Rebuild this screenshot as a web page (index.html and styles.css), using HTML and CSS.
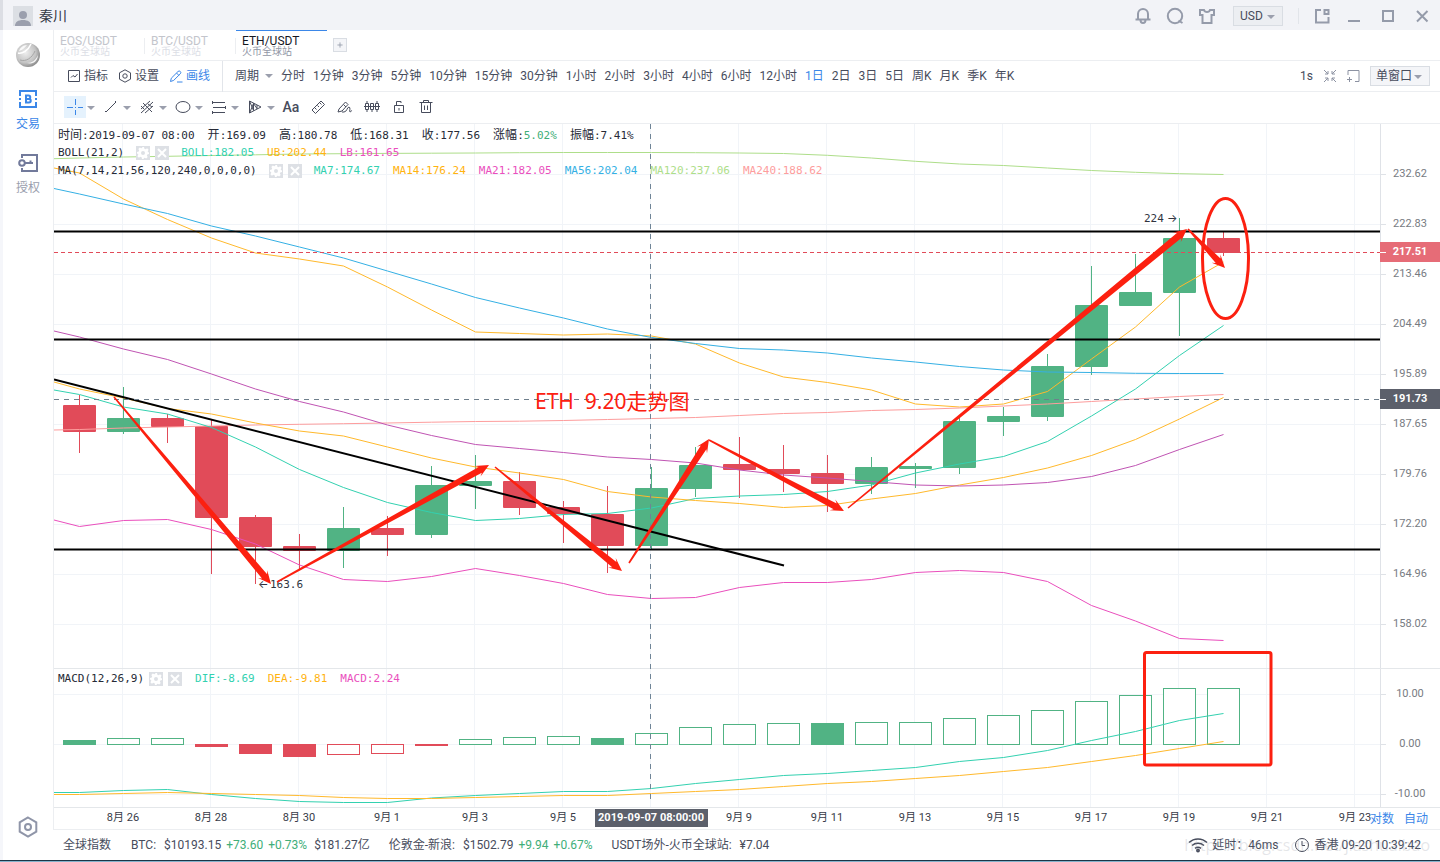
FILE: index.html
```html
<!DOCTYPE html>
<html lang="zh-CN">
<head>
<meta charset="utf-8">
<title>ETH/USDT</title>
<link rel="stylesheet" href="styles.css">
</head>
<body>
<svg class="symbols" aria-hidden="true">
  <symbol id="gear" viewBox="0 0 14 14"><path fill="#fff" fill-rule="evenodd" stroke="none" d="M6 1h2l.4 1.700 1.200.5 1.500-.9 1.500 1.500-.9 1.500.5 1.200L13 6v2l-1.700.4-.5 1.200.9 1.500-1.500 1.500-1.500-.9-1.200.5L8 13H6l-.4-1.700-1.200-.5-1.500.9-1.500-1.500.9-1.500-.5-1.200L1 8V6l1.700-.4.500-1.200-.9-1.500 1.500-1.500 1.500.9 1.200-.5zM7 5a2 2 0 1 0 0 4 2 2 0 0 0 0-4z"/></symbol>
  <symbol id="cross" viewBox="0 0 14 14"><path d="M3 3l8 8M11 3l-8 8" stroke="#fff" stroke-width="2"/></symbol>
</svg>
<div class="app">
  <header class="titlebar">
    <svg class="avatar" viewBox="0 0 20 20"><rect width="20" height="20" fill="#dcdfe4"/><circle cx="10" cy="9" r="4" fill="#9b9fad"/><path d="M2 20c0-4 3-6 8-6s8 2 8 6z" fill="#9b9fad"/></svg>
    <span class="user">秦川</span>
    <div class="window-tools">
      <button aria-label="通知"><svg viewBox="0 0 18 18"><path d="M4 12.500V7a5 5 0 0 1 10 0v5.500M1.500 12.500h15M6.500 13a2.500 3 0 0 0 5 0"/></svg></button>
      <button aria-label="搜索"><svg viewBox="0 0 18 18"><circle cx="9" cy="9" r="7.200"/><path d="M12.500 13.500l4 2.500"/></svg></button>
      <button aria-label="皮肤"><svg viewBox="0 0 18 18"><path d="M2 3h4c.8 2.600 5.200 2.600 6 0h4v5h-2.500v8h-9V8H2z"/></svg></button>
      <label class="picker picker-usd"><select aria-label="货币"><option>USD</option></select></label>
      <span class="rule"></span>
      <button aria-label="弹出"><svg viewBox="0 0 18 18"><path d="M8 3H3v12.500h12.500V10M11.500 3h4v4h-4z"/></svg></button>
      <button aria-label="最小化"><svg viewBox="0 0 18 18"><path d="M3 14h12"/></svg></button>
      <button aria-label="最大化"><svg viewBox="0 0 18 18"><path d="M4 4h10v10H4z"/></svg></button>
      <button aria-label="关闭"><svg viewBox="0 0 18 18"><path d="M4 4l10.500 10.500M14.500 4L4 14.500"/></svg></button>
    </div>
  </header>

  <div class="body">
    <nav class="sidebar">
      <svg class="logo" viewBox="0 0 24 24"><defs><radialGradient id="ball" cx=".4" cy=".4" r=".65"><stop offset="0" stop-color="#eee"/><stop offset=".65" stop-color="#c4c4c4"/><stop offset="1" stop-color="#868686"/></radialGradient></defs><circle cx="12" cy="12" r="12" fill="url(#ball)"/><path d="M2 10C6 11 12 8 15 1" stroke="#fff" stroke-width="1.500" fill="none"/><path d="M3 8c1-3 4-6 8-6-2 2-4 5-8 6zM11 20c5 0 9-3 11-8 0 5-4 10-11 8z" fill="#fff" opacity=".85"/><path d="M4 17c6 2 12-2 15-9" stroke="#a5a5a5" fill="none"/></svg>
      <a class="side-link active" href="#trade"><svg viewBox="0 0 20 20"><path d="M2 7V2h16v5M2 13v5h16v-5"/><path d="M1 9h2v2H1zM17 9h2v2h-2z" stroke="none" fill="currentColor"/><path d="M8 6.500h2.500a1.600 1.600 0 0 1 0 3.500H8zM8 10h3a1.700 1.700 0 0 1 0 3.500H8z"/></svg>交易</a>
      <a class="side-link" href="#auth"><svg viewBox="0 0 20 20"><path d="M4 5V2h15v16H4v-3"/><circle cx="4" cy="10" r="2.800"/><path d="M7 10h8M12.500 7.500V10"/></svg>授权</a>
      <button class="side-settings" aria-label="设置"><svg viewBox="0 0 22 22"><path d="M11 1.500l8.300 4.800v9.400L11 20.500l-8.300-4.800V6.300z"/><circle cx="11" cy="11" r="3"/></svg></button>
    </nav>

    <div class="content">
      <main class="workspace">
        <div class="tabs">
          <button class="tab"><b>EOS/USDT</b><small>火币全球站</small></button>
          <button class="tab"><b>BTC/USDT</b><small>火币全球站</small></button>
          <button class="tab current"><b>ETH/USDT</b><small>火币全球站</small></button>
          <button class="add" aria-label="添加"><svg viewBox="0 0 14 14"><path d="M4 7h6M7 4v6"/></svg></button>
        </div>

        <div class="toolbar">
          <button class="tool"><svg viewBox="0 0 14 14"><path d="M1.500 1.500h11v11h-11zM4 8.500l2-2 2 1.500 2.500-3"/></svg>指标</button>
          <button class="tool"><svg viewBox="0 0 14 14"><path d="M7 .8l5.500 3v6.400L7 13.200l-5.500-3V3.800z"/><circle cx="7" cy="7" r="2.200"/></svg>设置</button>
          <button class="tool on"><svg viewBox="0 0 14 14"><path d="M1.500 12.500l.8-3.300L9 2.500a1.600 1.600 0 0 1 2.300 2.300l-6.600 6.600zM7.500 4l2.300 2.300M8 13h5.500"/></svg>画线</button>
          <span class="rule"></span>
          <div class="periods">
            <button class="drop">周期</button><button>分时</button><button>1分钟</button><button>3分钟</button><button>5分钟</button><button>10分钟</button><button>15分钟</button><button>30分钟</button><button>1小时</button><button>2小时</button><button>3小时</button><button>4小时</button><button>6小时</button><button>12小时</button><button class="on">1日</button><button>2日</button><button>3日</button><button>5日</button><button>周K</button><button>月K</button><button>季K</button><button>年K</button>
          </div>
          <div class="view-tools">
            <span>1s</span>
            <button aria-label="收缩"><svg viewBox="0 0 14 14"><path d="M1 1l4 4M5 2v3H2M13 1L9 5M9 2v3h3M1 13l4-4M2 9h3v3M13 13L9 9M12 9H9v3"/></svg></button>
            <button aria-label="添加窗口"><svg viewBox="0 0 14 14"><path d="M2 6V1.500h11v11H9M1 10.500h5M3.500 8v5"/></svg></button>
            <label class="picker picker-window"><select aria-label="窗口"><option>单窗口</option></select></label>
          </div>
        </div>

        <div class="drawbar">
          <button class="pen has-menu on" aria-label="十字光标"><svg viewBox="0 0 16 16"><path d="M8.500 0v6M8.500 11v5M0 8.500h6M11 8.500h5M8 8.500h1"/></svg></button>
          <button class="pen has-menu" aria-label="线段"><svg viewBox="0 0 16 16"><path d="M3.500 12.500l9-9"/><path d="M2 12.500h2M12.500 2v2"/></svg></button>
          <button class="pen has-menu" aria-label="通道"><svg viewBox="0 0 16 16"><path d="M2 10l9-8M2 14L14 3M6 14l8-7M4 4l9 9M2 7l3 3M9 5l4 3"/></svg></button>
          <button class="pen has-menu" aria-label="椭圆"><svg viewBox="0 0 16 16"><ellipse cx="8" cy="8" rx="7" ry="5.500"/></svg></button>
          <button class="pen has-menu" aria-label="水平线"><svg viewBox="0 0 16 16"><path d="M1 3.500h13M2 8.500h13M1 13.500h13M1.500 2v3M14.500 7v3M1.500 12v3"/></svg></button>
          <button class="pen has-menu" aria-label="扇形"><svg viewBox="0 0 16 16"><path d="M2.500 2v12L14 8zM2.500 2l4 9.500M6.500 4.500v7M10 6v4M3 13l3.500-8.500L10 9.500"/></svg></button>
          <button class="pen letters">Aa</button>
          <button class="pen" aria-label="尺子"><svg viewBox="0 0 16 16"><path d="M2 11l9-9 3.500 3.500-9 9zM5 9l1.500 1.500M7.500 6.500L9 8M10 4l1.500 1.500"/></svg></button>
          <button class="pen" aria-label="画笔"><svg viewBox="0 0 16 16"><path d="M1 13l1-3 6.500-7 2.500 2.500L5 12zM6.500 5.500L9 8M5 13h2c3 0 3-5 5-5s0 5 1 5 1-1.500 2-1.500"/></svg></button>
          <button class="pen" aria-label="K线"><svg viewBox="0 0 16 16"><path d="M0 7.500h16M1.500 4.500h3v6h-3zM6.500 4.500h3v6h-3zM11.500 4.500h3v6h-3zM3 2v2M8 11v2M13 2v2M3 11v2M13 11v2"/></svg></button>
          <button class="pen" aria-label="锁定"><svg viewBox="0 0 16 16"><path d="M3.500 6.500h9v7h-9zM5.500 6.500v-4h4.500V4M8 9v2.500"/></svg></button>
          <button class="pen" aria-label="删除"><svg viewBox="0 0 16 16"><path d="M1.500 3.500h13M5.500 3.500v-2h5v2M3.500 3.500v10h9v-10M6.500 6.500v4.500M9.500 6.500v4.500"/></svg></button>
        </div>

        <section class="chart">
          <svg id="plot" class="plot" viewBox="54 124 1386 705" role="img" aria-label="ETH/USDT"></svg>
          <div class="legend legend-price">
            <p class="row"><span><i>时间</i>:2019-09-07 08:00</span><span><i>开</i>:169.09</span><span><i>高</i>:180.78</span><span><i>低</i>:168.31</span><span><i>收</i>:177.56</span><span><i>涨幅</i>:<em>5.02%</em></span><span><i>振幅</i>:7.41%</span></p>
            <p class="row"><span>BOLL(21,2)</span><span class="keys"><button class="key" aria-label="设置"><svg><use href="#gear"/></svg></button><button class="key" aria-label="关闭"><svg><use href="#cross"/></svg></button></span><span class="teal">BOLL:182.05</span><span class="amber">UB:202.44</span><span class="pink">LB:161.65</span></p>
            <p class="row"><span>MA(7,14,21,56,120,240,0,0,0,0)</span><span class="keys"><button class="key" aria-label="设置"><svg><use href="#gear"/></svg></button><button class="key" aria-label="关闭"><svg><use href="#cross"/></svg></button></span><span class="teal">MA7:174.67</span><span class="amber">MA14:176.24</span><span class="pink">MA21:182.05</span><span class="blue">MA56:202.04</span><span class="lime">MA120:237.06</span><span class="salmon">MA240:188.62</span></p>
          </div>
          <div class="legend legend-macd">
            <p class="row"><span class="name-keys">MACD(12,26,9)<span class="keys"><button class="key" aria-label="设置"><svg><use href="#gear"/></svg></button><button class="key" aria-label="关闭"><svg><use href="#cross"/></svg></button></span></span><span class="teal">DIF:-8.69</span><span class="amber">DEA:-9.81</span><span class="pink">MACD:2.24</span></p>
          </div>
          <div class="scale"><button>对数</button><button>自动</button></div>
        </section>
      </main>

      <footer class="status">
        <span>全球指数</span>
        <div class="quote"><span class="sym">BTC:</span><span>$10193.15</span><span class="up">+73.60</span><span class="up">+0.73%</span><span class="cap">$181.27亿</span></div>
        <div class="quote"><span class="sym">伦敦金-新浪:</span><span>$1502.79</span><span class="up">+9.94</span><span class="up">+0.67%</span></div>
        <div class="quote"><span class="sym">USDT场外-火币全球站:</span><span>¥7.04</span></div>
        <div class="net">
          <svg class="wifi" viewBox="0 0 20 16"><path d="M1 5.500a13 13 0 0 1 18 0M4 8.500a9 9 0 0 1 12 0M7 11.300a5 5 0 0 1 6 0"/><circle cx="10" cy="13.500" r="1.200" fill="currentColor"/></svg>
          <span>延时：46ms</span>
          <svg class="clock" viewBox="0 0 16 16"><circle cx="8" cy="8" r="6.500"/><path d="M8 4v4.500h3"/></svg>
          <span>香港 09-20 10:39:42</span>
          <span class="watermark">https://blog.csdn.net/jiashuaibao</span>
        </div>
      </footer>
    </div>
  </div>
  <div class="desktop-edge"></div>
</div>
<script src="chart.js"></script>
</body>
</html>
```

FILE: styles.css
```css
* { box-sizing: border-box; }
body {
  margin: 0;
  background: #fff;
  color: #474c5c;
  font: 12px/16px Roboto, "Noto Sans CJK SC", sans-serif;
}
button, select { font: inherit; color: inherit; }
button { display: inline-flex; align-items: center; justify-content: center; padding: 0; border: 0; background: none; }
svg { display: block; fill: none; stroke: currentColor; }
.symbols { position: absolute; width: 0; height: 0; }
.app { display: flex; flex-direction: column; min-height: 100vh; border-left: 3px solid #f5f6fa; }

.titlebar { display: flex; align-items: center; height: 30px; margin-left: -3px; padding: 2px 9px 0 10px; border-left: 3px solid #dcdee4; background: #f2f3f7; }
.avatar { width: 20px; height: 20px; stroke: none; }
.user { margin-left: 6px; color: #333845; font-size: 14px; }
.window-tools { display: flex; align-items: center; margin-left: auto; color: #959baa; }
.window-tools button { width: 18px; height: 18px; margin-right: 14px; }
.window-tools button svg { width: 18px; height: 18px; stroke-width: 2; }
.window-tools .picker-usd { margin: 0 15px 0 3px; }
.window-tools .rule { margin-right: 14px; }
.window-tools .rule ~ button { margin-right: 16px; }
.window-tools .rule + button { margin-right: 14px; }
.window-tools .rule ~ button:last-child { margin-right: 0; }
.rule { width: 1px; height: 16px; background: #e2e5ea; }
.picker { position: relative; display: block; height: 20px; border: 1px solid #d9dde3; background: #eceef2; color: #474c5c; }
.picker select { width: 100%; height: 18px; padding: 0 0 0 6px; border: 0; appearance: none; background: none; }
.picker::after, .drop::after, .has-menu::after { content: ""; border: 4px solid transparent; border-top: 4px solid #9b9fad; border-bottom: 0; }
.picker::after { position: absolute; right: 7px; top: 8px; pointer-events: none; }
.picker-usd { width: 50px; }
.picker-window { width: 60px; background: #f4f5f8; }
.picker-window select { padding-left: 5px; }

.body { display: flex; flex: 1; }
.sidebar { display: flex; flex: none; flex-direction: column; align-items: center; width: 50px; padding: 13px 0 22px; }
.logo { width: 24px; height: 24px; stroke: none; }
.side-link { display: flex; flex-direction: column; align-items: center; gap: 7px; margin-top: 22px; color: #9a9ead; text-decoration: none; }
.side-link + .side-link { margin-top: 21px; }
.side-link svg { width: 20px; height: 20px; stroke: #727a9b; stroke-width: 2; }
.side-link.active, .side-link.active svg { color: #3b87e8; stroke: #3b87e8; }
.side-settings { margin-top: auto; color: #8f95a8; }
.side-settings svg { width: 22px; height: 22px; stroke-width: 2; }

.content { flex: 1; min-width: 0; }
.workspace { border-left: 1px solid #eceef1; border-bottom: 1px solid #eceef1; }
.tabs { display: flex; height: 31px; border-bottom: 1px solid #eceef1; }
.tab { position: relative; flex-direction: column; align-items: flex-start; width: 91px; padding: 1px 0 0 6px; border-top: 1px solid transparent; color: #c3c5cc; }
.tab:first-child::after, .tab:nth-child(2)::after { content: ""; position: absolute; right: 0; top: 7px; width: 1px; height: 16px; background: #eceef1; }
.tab b { font-weight: 400; line-height: 12px; }
.tab small { color: #dcdee6; font-size: 10px; line-height: 10px; }
.tab.current { border-top-color: #3b87e8; color: #14171f; }
.tab.current small { color: #9297a6; }
.add { width: 14px; height: 14px; margin: 8px 6px; border: 1px solid #d9dde3; background: #f4f5f8; color: #959baa; }
.add svg { width: 14px; height: 14px; stroke-width: 1; }

.toolbar { display: flex; align-items: center; height: 31px; padding: 0 10px 0 13px; border-bottom: 1px solid #eceef1; white-space: nowrap; }
.tool { gap: 3px; margin-right: 10px; }
.tool svg { width: 14px; height: 14px; }
.tool + .rule { height: 31px; margin: 0 12px 0 2px; }
.on { color: #3b87e8; }
.periods { display: flex; gap: 8px; }
.drop { gap: 6px; }
.view-tools { display: flex; align-items: center; gap: 11px; margin-left: auto; color: #474c5c; }
.view-tools svg { width: 14px; height: 14px; flex: none; stroke: #8c92a2; }
.view-tools button { width: 12px; }

.drawbar { display: flex; align-items: center; height: 32px; padding: 0 0 1px 10px; border-bottom: 1px solid #eceef1; }
.pen { width: 22px; height: 22px; margin-right: 5px; }
.pen svg { width: 16px; height: 16px; flex: none; }
.has-menu { position: relative; margin-right: 14px; }
.has-menu::after { position: absolute; left: 23px; top: 10px; }
.pen.on { background: #e5f2fd; }
.letters { font-size: 14px; font-weight: 500; }

.chart { position: relative; }
.plot { width: 100%; height: auto; stroke: none; font: 11px Roboto, "Noto Sans CJK SC", sans-serif; }
.mono { font-family: "DejaVu Sans Mono", monospace; fill: #30343f; }
.pointer { font-family: Inter, sans-serif; fill: #30343f; }
.note { font: 21px "Noto Sans", "Noto Sans CJK SC", sans-serif; fill: #fc2010; white-space: pre; }
.axis-text { fill: #777b82; text-anchor: middle; }
.time-text { fill: #383c48; text-anchor: middle; }
.tag-text { fill: #fff; font-weight: 700; text-anchor: middle; }
.legend { position: absolute; left: 4px; font: 11px/18px "DejaVu Sans Mono", "Noto Sans CJK SC", monospace; color: #262a36; white-space: nowrap; }
.legend-price { top: 2px; }
.legend-macd { top: 77.4%; }
.row { display: flex; align-items: center; gap: 13px; height: 18px; margin: 0; }
.row i { font-size: 12px; font-style: normal; }
.row em { font-style: normal; color: #41ae79; }
.keys { display: flex; gap: 5px; }
.row > .keys { margin: 0 -1px; }
.name-keys { display: flex; align-items: center; gap: 5px; }
.key { width: 14px; height: 14px; background: #dde0e5; }
.key svg { width: 14px; height: 14px; flex: none; }
.teal { color: #33d1b0; }
.amber { color: #ffb30f; }
.pink { color: #ea4fbd; }
.blue { color: #35b0e4; }
.lime { color: #aede8a; }
.salmon { color: #fd9d9d; }
.scale { position: absolute; right: 12px; bottom: 2px; display: flex; gap: 10px; color: #3b87e8; }

.status { position: relative; display: flex; align-items: center; height: 30px; padding: 0 19px 0 10px; white-space: nowrap; }
.quote { display: flex; gap: 5px; margin-left: 20px; }
.quote + .quote { margin-left: 19px; }
.sym { margin-right: 3px; }
.cap { margin-left: 2px; }
.up { color: #41ae79; }
.net { position: relative; display: flex; align-items: center; gap: 4px; margin-left: auto; }
.wifi { width: 20px; height: 16px; stroke-width: 1.5; }
.clock { width: 16px; height: 16px; margin-left: 12px; }
.watermark { position: absolute; left: -4px; top: -2px; font: 16px/20px "Open Sans", sans-serif; color: rgba(150, 154, 165, .25); }
.desktop-edge { height: 2px; margin-left: -3px; background: linear-gradient(#1b3547 50%, #86b2cb 50%); }
```

FILE: chart.js
```js
const FIRST_X = 79.5;
const STEP = 44;
const UP = "#51b384";
const DOWN = "#e14b59";
const parts = [];
const add = (s) => parts.push(s);
const line = (x1, y1, x2, y2, color, extra = "") =>
  add(`<line x1="${x1}" y1="${y1}" x2="${x2}" y2="${y2}" stroke="${color}" ${extra}/>`);
const text = (x, y, cls, s) => add(`<text x="${x}" y="${y}" class="${cls}">${s}</text>`);

// Grid and axes
const prices = ["232.62", "222.83", "213.46", "204.49", "195.89", "187.65", "179.76", "172.20", "164.96", "158.02"];
const levels = prices.map((p, i) => [174.5 + i * 50, p])
  .concat([[694.5, "10.00"], [744.5, "0.00"], [794.5, "-10.00"]]);
const days = ["8月 26", "8月 28", "8月 30", "9月 1", "9月 3", "9月 5", "", "9月 9", "9月 11", "9月 13", "9月 15", "9月 17", "9月 19", "9月 21", "9月 23"];
levels.forEach(([y, label]) => {
  line(54, y, 1380, y, "#f1f4f8");
  line(1381, y, 1386, y, "#dfe2e7");
  text(1410, y + 2.5, "axis-text", label);
});
days.forEach((label, i) => {
  const x = 122.5 + i * 88;
  line(x, 124, x, 807, "#f1f4f8");
  if (label) text(x + 0.5, 821, "time-text", label);
});
line(1380.5, 124, 1380.5, 807, "#dfe2e7");
line(54, 668.5, 1440, 668.5, "#e4e7ea");
line(54, 807.5, 1440, 807.5, "#e4e7ea");

// Candles: [rising, body top, body bottom, high, low]
const candles = [
  [0, 405, 432, 395, 453], [1, 418, 432, 387, 434], [0, 418, 427, 414, 443], [0, 426, 518, 420, 574],
  [0, 517, 547, 515, 584], [0, 546, 551, 534, 570], [1, 528, 551, 507, 568], [0, 528, 535, 516, 556],
  [1, 485, 535, 466, 538], [1, 481, 486, 455, 509], [0, 481, 508, 472, 515], [0, 507, 514, 501, 543],
  [0, 514, 546, 486, 573], [1, 488, 546, 467, 550], [1, 465, 489, 447, 497], [0, 464, 470, 437, 498],
  [0, 469, 474, 445, 492], [0, 473, 484, 455, 512], [1, 467, 484, 457, 494], [1, 466, 469, 463, 488],
  [1, 421, 468, 416, 474], [1, 416, 422, 407, 436], [1, 366, 417, 354, 421], [1, 305, 367, 266, 375],
  [1, 292, 306, 254, 306], [1, 238, 293, 218, 336], [0, 238, 253, 232, 256]
];
candles.forEach(([up, top, bottom, high, low], i) => {
  const x = FIRST_X + i * STEP;
  const c = up ? UP : DOWN;
  line(x, high, x, low, c);
  add(`<rect x="${x - 16.5}" y="${top}" width="33" height="${bottom - top}" rx="1" fill="${c}"/>`);
});

// MACD bars: [rising, filled, far edge]
const bars = [
  [1, 1, 740], [1, 0, 738], [1, 0, 738], [0, 1, 747], [0, 1, 754], [0, 1, 757], [0, 0, 755], [0, 0, 754], [0, 1, 746],
  [1, 0, 739], [1, 0, 737], [1, 0, 736], [1, 1, 738], [1, 0, 733], [1, 0, 727], [1, 0, 724], [1, 0, 723], [1, 1, 723],
  [1, 0, 722], [1, 0, 722], [1, 0, 718], [1, 0, 715], [1, 0, 710], [1, 0, 701], [1, 0, 695], [1, 0, 688], [1, 0, 688]
];
bars.forEach(([up, filled, edge], i) => {
  const x = 63 + i * STEP;
  const top = up ? edge : 744;
  const bottom = up ? 745 : edge;
  const c = up ? UP : DOWN;
  add(`<rect x="${x + 0.5}" y="${top + 0.5}" width="32" height="${bottom - top - 1}" stroke="${c}" fill="${filled ? c : "#fff"}"/>`);
});

// Indicator lines: the first value sits at the left edge, the rest on each candle
const curve = (color, values) => {
  const pts = values.map((y, i) => `${i ? FIRST_X + (i - 1) * STEP : 54},${y}`).join(" ");
  add(`<polyline points="${pts}" fill="none" stroke="${color}"/>`);
};
curve("#aede8a", [158.7, 158, 157, 156.3, 155.5, 154.8, 154, 153.7, 153.4, 153.2, 153, 152.7, 152.5, 152.5, 152.5, 152.7, 153, 153.5, 155.3, 158, 161.3, 164, 165.5, 168, 170.5, 172.3, 173.7, 174.5]);
curve("#ffb92c", [168, 173, 199, 219.5, 238, 253, 259, 266, 287, 310, 332, 333.5, 335, 334, 336, 344, 363, 377, 382.5, 390, 404, 407, 404, 391.5, 359, 327, 287, 262]);
curve("#35b0e4", [188.5, 194, 204, 213.5, 226, 236, 247, 258, 271, 284, 297.5, 308, 318, 329, 337.5, 343.5, 348.5, 350, 353, 358, 362, 366.5, 370, 372, 372.5, 373.3, 373.5, 373.5]);
curve("#fd9d9d", [430, 429.5, 428, 427, 426, 425, 424.3, 423.7, 423, 422.2, 421.5, 421.2, 420.5, 419.5, 418.5, 417.5, 415.5, 413.5, 412.5, 410.5, 409.5, 408, 406, 404, 401.5, 399, 396.5, 394.5]);
curve("#33d1b0", [390, 394.5, 407, 414, 427.5, 447, 469.5, 487.5, 502.5, 512.5, 520.5, 518.5, 514.5, 513.5, 508, 498.5, 496, 494.5, 491.5, 485, 473, 464, 456.5, 441.5, 416, 389, 355.5, 325.5]);
curve("#ffb92c", [382, 389, 398, 408.5, 414, 423, 431, 436, 447, 458, 467, 473, 479.5, 491.5, 497, 500.5, 503.5, 507.5, 505.5, 499, 493.5, 485, 477.5, 468, 455.5, 439.5, 419, 397.5]);
curve("#c054b3", [331, 337, 349, 359.5, 374, 389, 401.5, 412, 425, 435.5, 444.5, 448.5, 452.5, 457, 459.5, 463, 470, 475, 478, 481.5, 485, 486, 485, 482.5, 476.5, 465.5, 449.5, 434.5]);
curve("#ea4fbd", [520, 526.5, 520.5, 519.5, 529.5, 544, 565, 579.5, 581.5, 576.5, 568.5, 575.5, 583.5, 594.5, 598.5, 597.5, 587.5, 582.5, 582.5, 579.5, 572.5, 570.5, 572.5, 581.5, 605.5, 621, 638.5, 640.5]);
curve("#33d1b0", [792.5, 792.5, 790.5, 789.5, 794.5, 798.5, 801.5, 802.5, 802.5, 798, 795.5, 793.5, 791.5, 791.5, 788.5, 783.5, 779.5, 775.5, 773.5, 770.5, 767.5, 761.5, 757.5, 750.5, 740.5, 731.5, 720.5, 713.5]);
curve("#ffb92c", [794.5, 794.5, 793.5, 792.5, 793.5, 794.5, 795.5, 797.5, 798.5, 798.5, 797.5, 796.5, 795.5, 795.5, 793.5, 791.5, 789.5, 786.5, 783.5, 781.5, 778.5, 775.5, 771.5, 767.5, 761.5, 755.5, 748.5, 741.5]);

// Support and resistance
[231.5, 339.5, 549.5].forEach((y) => line(54, y, 1380, y, "#000", 'stroke-width="2"'));
line(54, 379.5, 784, 565.5, "#000", 'stroke-width="2"');

// Last price and crosshair
line(54, 252.5, 1380, 252.5, "#e14b59", 'stroke-dasharray="4 3"');
line(54, 399.5, 1380, 399.5, "#6f7f8c", 'stroke-dasharray="5 5"');
line(650.5, 124, 650.5, 804, "#6f8496", 'stroke-dasharray="5 5"');
[[242, "#e66c77", "217.51"], [389, "#5c606b", "191.73"]].forEach(([y, c, label]) => {
  add(`<rect x="1380" y="${y}" width="60" height="20" fill="${c}"/>`);
  line(1380, y + 10.5, 1386, y + 10.5, "#fff");
  text(1410, y + 13, "tag-text", label);
});
add('<rect x="595" y="809" width="113" height="18" fill="#5c606b"/>');
text(651, 821, "tag-text", "2019-09-07 08:00:00");
text(1144, 222, "mono", "224");
text(1167, 222, "pointer", "→");
text(258, 588, "pointer", "←");
text(270, 588, "mono", "163.6");

// Hand-drawn marks
const RED = "#fc2010";
const arrow = (x1, y1, x2, y2) => {
  const len = Math.hypot(x2 - x1, y2 - y1);
  const ux = (x2 - x1) / len;
  const uy = (y2 - y1) / len;
  const at = (d, w) => `${(x1 + ux * d - uy * w).toFixed(1)},${(y1 + uy * d + ux * w).toFixed(1)}`;
  const pts = [at(0, 0.8), at(len - 10, 3.3), at(len - 13, 6), at(len, 0), at(len - 13, -6), at(len - 10, -3.3), at(0, -0.8)];
  add(`<polygon points="${pts.join(" ")}" fill="${RED}"/>`);
};
arrow(114, 397, 271, 584);
arrow(277, 582, 489, 465);
arrow(495, 467, 622, 571);
arrow(629, 563, 709, 439);
arrow(709, 440, 844, 511);
arrow(848, 508, 1187, 229);
arrow(1188, 229, 1225, 268);
add(`<ellipse cx="1225.5" cy="258.5" rx="23" ry="60" fill="none" stroke="${RED}" stroke-width="3"/>`);
add(`<rect x="1144.5" y="652.5" width="126.5" height="112.5" rx="2" fill="none" stroke="${RED}" stroke-width="3"/>`);
text(535, 409, "note", "ETH  9.20走势图");

document.getElementById("plot").innerHTML = parts.join("");
```
